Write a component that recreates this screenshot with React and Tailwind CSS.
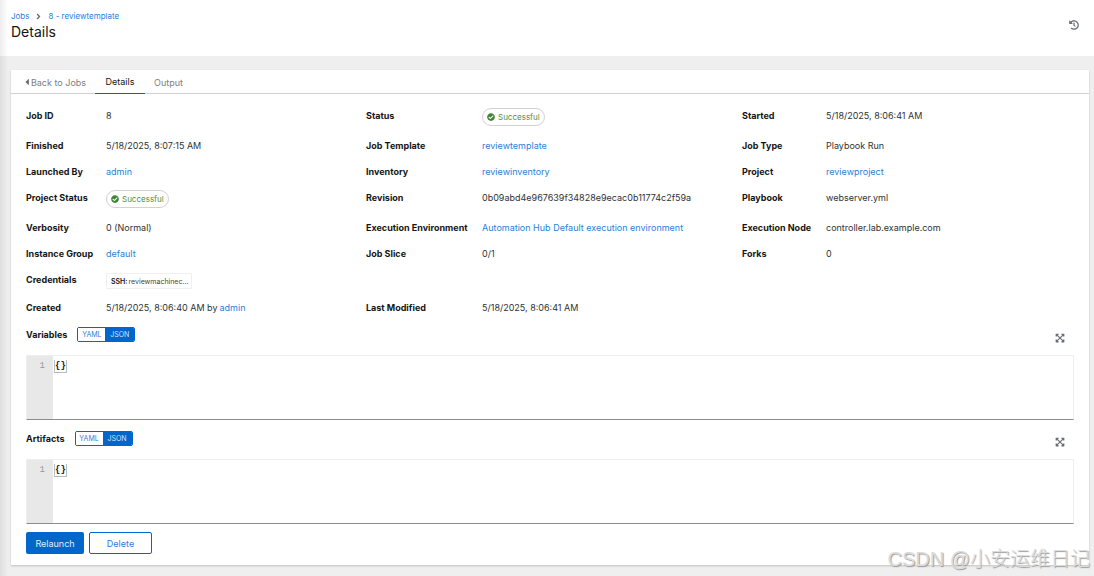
import React, { useState } from "react";
import {
  FaAngleRight,
  FaCaretLeft,
  FaCheckCircle,
  FaExpandArrowsAlt,
  FaHistory,
} from "react-icons/fa";

const linkClass = "text-[#2b80d8] hover:underline";

const StatusLabel = ({ children }) => (
  <span className="mb-px inline-flex h-[18px] items-center gap-[3px] rounded-full border border-[#d2d2d2] bg-white px-1 text-[8px] text-[#4a9440]">
    <FaCheckCircle size={8} className="text-[#3e8635]" />
    {children}
  </span>
);

const Link = ({ children }) => (
  <a href="#" className={linkClass}>
    {children}
  </a>
);

const DETAILS = [
  { label: "Job ID", value: "8" },
  { label: "Status", value: <StatusLabel>Successful</StatusLabel> },
  { label: "Started", value: "5/18/2025, 8:06:41 AM" },
  { label: "Finished", value: "5/18/2025, 8:07:15 AM" },
  { label: "Job Template", value: <Link>reviewtemplate</Link> },
  { label: "Job Type", value: "Playbook Run" },
  { label: "Launched By", value: <Link>admin</Link> },
  { label: "Inventory", value: <Link>reviewinventory</Link> },
  { label: "Project", value: <Link>reviewproject</Link> },
  { label: "Project Status", value: <StatusLabel>Successful</StatusLabel> },
  { label: "Revision", value: "0b09abd4e967639f34828e9ecac0b11774c2f59a" },
  { label: "Playbook", value: "webserver.yml" },
  { label: "Verbosity", value: "0 (Normal)" },
  {
    label: "Execution Environment",
    value: <Link>Automation Hub Default execution environment</Link>,
  },
  { label: "Execution Node", value: "controller.lab.example.com" },
  { label: "Instance Group", value: <Link>default</Link> },
  { label: "Job Slice", value: "0/1" },
  { label: "Forks", value: "0" },
  {
    label: "Credentials",
    wide: true,
    value: (
      <span className="mt-px inline-flex h-4 w-[86px] items-center gap-px border border-[#f0f0f0] px-1 text-[7px] text-[#444]">
        <b className="font-semibold text-[#151515]">SSH:</b>
        <span>reviewmachinec...</span>
      </span>
    ),
  },
  {
    label: "Created",
    value: (
      <>
        5/18/2025, 8:06:40 AM by <Link>admin</Link>
      </>
    ),
  },
  { label: "Last Modified", value: "5/18/2025, 8:06:41 AM" },
];

const CodeDetail = ({ label }) => {
  const [mode, setMode] = useState("JSON");

  return (
    <section aria-label={label}>
      <div className="flex h-7 items-start justify-between">
        <div className="flex items-center gap-[10px]">
          <h2 className="font-bold text-[#151515]">{label}</h2>
          <div className="flex overflow-hidden rounded-xs border border-[#06c] text-[7px] leading-[13px]">
            {["YAML", "JSON"].map((name) => (
              <button
                key={name}
                type="button"
                aria-pressed={mode === name}
                onClick={() => setMode(name)}
                className={
                  mode === name
                    ? "w-[29px] bg-[#06c] text-[#cfe2f5]"
                    : "w-[27px] bg-white text-[#2b80d8]"
                }
              >
                {name}
              </button>
            ))}
          </div>
        </div>
        <button type="button" aria-label={`Expand ${label}`} className="mt-[6px] mr-[9px] text-[#6a6e73]">
          <FaExpandArrowsAlt size={10} />
        </button>
      </div>
      <div className="flex h-[65px] border border-[#efefef] border-b-[#8a8d90] font-['Liberation_Mono',monospace] text-[9px] leading-3">
        <div className="w-[26px] bg-[#e8e8e8] pt-1 pr-2 text-right text-[#999]">1</div>
        <pre className="pt-1 pl-px font-[inherit] font-bold text-[#151515]">
          <code className="block border-x border-b border-[#b8bbbe] font-[inherit]">
            {mode === "JSON" ? "{}" : "---"}
          </code>
        </pre>
      </div>
    </section>
  );
};

const JobDetails = () => {
  return (
    <div className="relative flex min-h-screen flex-col bg-[#efefef] font-[Inter,sans-serif] text-[9px] leading-[15px] text-[#2f3235]">
      <header className="flex h-14 items-start justify-between bg-white pt-[10px] pr-[15px] pl-[11px]">
        <div>
          <nav aria-label="Breadcrumb" className="flex items-center gap-[5px] text-[8px] leading-3">
            <Link>Jobs</Link>
            <FaAngleRight size={9} className="text-[#6a6e73]" />
            <Link>8 - reviewtemplate</Link>
          </nav>
          <h1 className="text-[14px] leading-5 text-[#151515]">Details</h1>
        </div>
        <button type="button" aria-label="History" className="mt-[10px] text-[#6a6e73]">
          <FaHistory size={10} />
        </button>
      </header>

      <main className="mt-[14px] mr-[5px] mb-[11px] ml-[11px] grow bg-white shadow-[0_1px_2px_#0003]">
        <nav className="flex h-6 border-b border-[#d2d2d2] pl-[5px] text-[#7d8084]">
          <a href="#" className="flex h-6 w-[79px] items-center justify-center gap-[2px]">
            <FaCaretLeft size={10} className="w-1 text-[#6a6e73]" />
            Back to Jobs
          </a>
          <a
            href="#"
            aria-current="page"
            className="flex h-6 w-[50px] items-center justify-center border-b border-[#06c] text-[#151515]"
          >
            Details
          </a>
          <a href="#" className="flex h-6 items-center px-[9px]">
            Output
          </a>
        </nav>

        <div className="px-[15px] pt-[14px] pb-[11px]">
          <dl className="grid grid-cols-[68px_1fr_104px_1fr_72px_1fr] gap-x-3 gap-y-[11px] whitespace-nowrap">
            {DETAILS.map(({ label, value, wide }) => (
              <React.Fragment key={label}>
                <dt className="font-bold text-[#151515]">{label}</dt>
                <dd className={wide ? "col-span-5 flex min-w-0" : "flex min-w-0 gap-[2px]"}>
                  {value}
                </dd>
              </React.Fragment>
            ))}
          </dl>

          <div className="mt-3 space-y-[11px]">
            <CodeDetail label="Variables" />
            <CodeDetail label="Artifacts" />
          </div>

          <div className="mt-2 flex gap-[5px]">
            <button type="button" className="h-[22px] w-[58px] rounded-xs bg-[#06c] text-[#e4effa]">
              Relaunch
            </button>
            <button
              type="button"
              className="h-[22px] w-[63px] rounded-xs border border-[#06c] text-[#2b80d8]"
            >
              Delete
            </button>
          </div>
        </div>
      </main>

      {/* soft shadow cast by the collapsed sidebar */}
      <div className="pointer-events-none absolute inset-y-0 left-0 w-2 bg-gradient-to-r from-black/7 to-transparent" />

      <div className="pointer-events-none absolute right-1 bottom-[3px] font-['Liberation_Sans','Noto_Sans_CJK_SC',sans-serif] text-[20px] leading-7 font-light whitespace-nowrap text-[#dcdcdc] [text-shadow:1px_1px_1px_#999]">
        CSDN @小安运维日记
      </div>
    </div>
  );
};

export default JobDetails;
